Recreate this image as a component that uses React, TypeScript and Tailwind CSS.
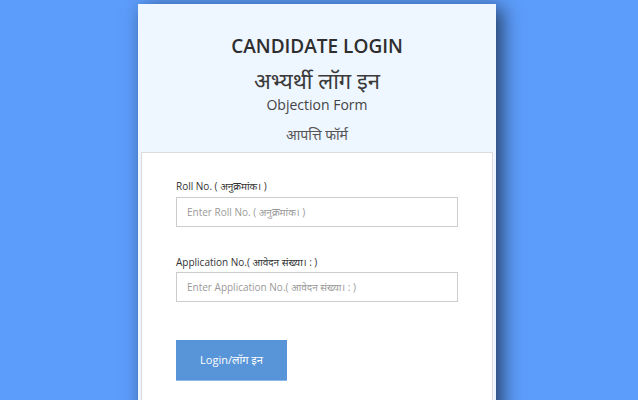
import React from 'react';

const font = { fontFamily: '"Open Sans", "Noto Sans", "Noto Sans CJK SC", sans-serif' };

export default function App() {
  return (
    <div className="w-[638px] h-[400px] overflow-hidden bg-[#5c9cfa]" style={font}>
      <div className="ml-[138px] mt-[4px] w-[358px] h-[420px] bg-[#eef6ff] shadow-[6px_4px_18px_rgba(0,0,0,0.6)] flex flex-col">
        {/* 标题区域 */}
        <div className="h-[148px] flex flex-col items-center pt-[28px] text-[#333]">
          <h1 className="h-[28px] text-[19px] leading-[28px] font-semibold text-[#2e2e2e]">CANDIDATE LOGIN</h1>
          <h2 className="mt-[5px] h-[30px] text-[22px] leading-[30px] font-normal text-[#3a3a3a]">अभ्यर्थी लॉग इन</h2>
          <p className="h-[20px] text-[14px] leading-[20px] text-[#444]">Objection Form</p>
          <p className="mt-[10px] h-[20px] text-[14px] leading-[20px] text-[#555]">आपत्ति फॉर्म</p>
        </div>

        {/* 表单 */}
        <div className="mx-[3px] flex-1 bg-white border border-[#dcdcdc] px-[34px] pt-[26px]">
          <label className="block h-[14px] text-[10px] leading-[14px] text-[#333]">Roll No. ( अनुक्रमांक। )</label>
          <input
            className="block mt-[4px] w-full h-[30px] border border-[#ccc] px-[10px] text-[10px] placeholder:text-[#999] outline-none"
            placeholder="Enter Roll No. ( अनुक्रमांक। )"
          />
          <label className="block mt-[28px] h-[14px] text-[10px] leading-[14px] text-[#333]">Application No.( आवेदन संख्या। : )</label>
          <input
            className="block mt-[3px] w-full h-[30px] border border-[#ccc] px-[10px] text-[10px] placeholder:text-[#999] outline-none"
            placeholder="Enter Application No.( आवेदन संख्या। : )"
          />
          <button className="block mt-[38px] w-[111px] h-[41px] bg-[#5795d8] text-white text-[11px] border-b border-[#8fb8ea]">
            Login/लॉग इन
          </button>
        </div>
      </div>
    </div>
  );
}
